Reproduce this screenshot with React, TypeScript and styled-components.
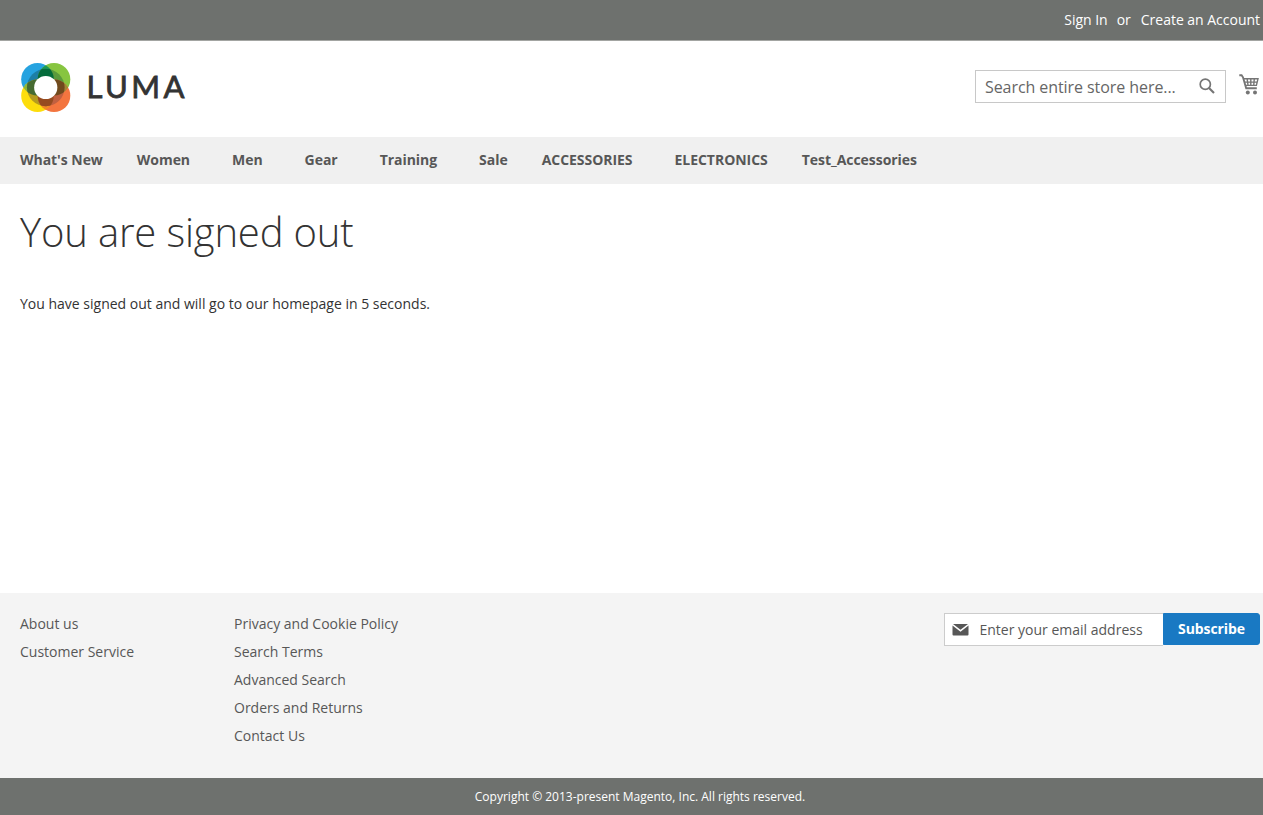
import React from "react";
import styled, { createGlobalStyle } from "styled-components";

const GlobalStyle = createGlobalStyle`
  *, *::before, *::after { box-sizing: border-box; }
  body {
    margin: 0;
    background: #fff;
    color: #333;
    font: 400 14px/20px "Open Sans", "Noto Sans", sans-serif;
  }
  a { color: inherit; text-decoration: none; }
`;

const Page = styled.div`
  display: flex;
  flex-direction: column;
  min-height: 815px;
  overflow: hidden;
`;

const Panel = styled.div`
  display: flex;
  justify-content: flex-end;
  height: 41px;
  padding: 10px 3px 0 0;
  background: #6e716e;
  border-bottom: 1px solid #a3a5a2;
  color: #fff;
`;

const PanelText = styled.span<{ $gap?: number }>`
  margin-left: ${(p) => p.$gap ?? 0}px;
  letter-spacing: -0.02px;
`;

const Header = styled.header`
  display: flex;
  justify-content: space-between;
  height: 96px;
  padding: 21px 3px 0 20px;
`;

const Logo = styled.a`
  display: flex;
  align-items: flex-start;
`;

const Wordmark = styled.span`
  margin: 4px 0 0 13.5px;
  color: #333;
  font: 400 31px/40px Lato, sans-serif;
  letter-spacing: 3.4px;
  -webkit-text-stroke: 0.8px #333;
`;

const HeaderTools = styled.div`
  display: flex;
  align-items: flex-start;
  padding-top: 8px;
`;

const SearchBox = styled.div`
  display: flex;
  justify-content: space-between;
  width: 251px;
  height: 33px;
  padding: 0 10px 0 9px;
  border: 1px solid #c8c8c8;
  background: #fff;
  color: #666;
  font-size: 16px;
  line-height: 33px;
  letter-spacing: -0.07px;
  svg { margin-top: 7px; }
`;

const CartLink = styled.a`
  display: block;
  margin: 4px 0 0 13px;
  height: 22px;
`;

const Nav = styled.nav`
  display: flex;
  height: 47px;
  padding: 13px 20px 0;
  background: #f0f0f0;
  color: #575757;
  font-weight: 700;
  letter-spacing: -0.042px;
`;

const NavItem = styled.a<{ $gap: number }>`
  margin-right: ${(p) => p.$gap}px;
  white-space: nowrap;
`;

const Main = styled.main`
  flex: 1;
  padding: 26px 20px 0;
`;

const Title = styled.h1`
  margin: 0 0 40px;
  font-size: 40px;
  font-weight: 300;
  line-height: 44px;
  letter-spacing: -0.16px;
`;

const Message = styled.p`
  margin: 0;
`;

const Footer = styled.footer`
  display: flex;
  height: 185px;
  padding: 20px 3px 0 20px;
  background: #f4f4f4;
  color: #575757;
`;

const FooterLinks = styled.ul<{ $width: number }>`
  width: ${(p) => p.$width}px;
  margin: 0;
  padding: 1px 0 0;
  list-style: none;
  li { height: 28px; }
`;

const Newsletter = styled.form`
  display: flex;
  margin-left: auto;
`;

const EmailField = styled.div`
  display: flex;
  width: 219px;
  height: 33px;
  padding-left: 7px;
  border: 1px solid #ccc;
  border-right: 0;
  background: #fff;
  line-height: 31px;
  svg { margin: 10px 10.5px 0 0; }
`;

const Subscribe = styled.button`
  width: 97px;
  height: 32px;
  padding: 0;
  border: 1px solid #1979c3;
  border-radius: 0 3px 3px 0;
  background: #1979c3;
  color: #fff;
  font: 700 14px/30px "Open Sans", sans-serif;
  letter-spacing: -0.1px;
`;

const Copyright = styled.small`
  height: 37px;
  padding: 9px 0 0 17px;
  background: #6e716e;
  color: #fff;
  font-size: 12px;
  text-align: center;
`;

const LogoMark = () => (
  <svg width="53" height="52" viewBox="0 0 53 52">
    <defs>
      <clipPath id="petal-tl"><circle cx="17.5" cy="17.3" r="16.3" /></clipPath>
      <clipPath id="petal-tr"><circle cx="34" cy="17.3" r="16.3" /></clipPath>
      <clipPath id="petal-br"><circle cx="34" cy="33.7" r="16.3" /></clipPath>
      <clipPath id="petal-bl"><circle cx="17.5" cy="33.7" r="16.3" /></clipPath>
    </defs>
    <circle cx="17.5" cy="17.3" r="16.3" fill="#26a3e0" />
    <circle cx="34" cy="17.3" r="16.3" fill="#87c540" />
    <circle cx="17.5" cy="33.7" r="16.3" fill="#fddd0c" />
    <circle cx="34" cy="33.7" r="16.3" fill="#f3753f" />
    <circle cx="34" cy="17.3" r="16.3" fill="#1b9a55" clipPath="url(#petal-tl)" />
    <circle cx="17.5" cy="33.7" r="16.3" fill="#8bb53c" clipPath="url(#petal-tl)" />
    <circle cx="17.5" cy="33.7" r="16.3" fill="#f08a24" clipPath="url(#petal-br)" />
    <circle cx="34" cy="33.7" r="16.3" fill="#a08a35" clipPath="url(#petal-tr)" />
    <circle cx="25.75" cy="25.5" r="18.8" fill="#1d7fa6" clipPath="url(#petal-tl)" />
    <circle cx="25.75" cy="25.5" r="18.8" fill="#5b9a3c" clipPath="url(#petal-tr)" />
    <circle cx="25.75" cy="25.5" r="18.8" fill="#b59b1f" clipPath="url(#petal-bl)" />
    <circle cx="25.75" cy="25.5" r="18.8" fill="#c06040" clipPath="url(#petal-br)" />
    <g clipPath="url(#petal-tl)">
      <circle cx="25.75" cy="25.5" r="18.8" fill="#056c3c" clipPath="url(#petal-tr)" />
      <circle cx="25.75" cy="25.5" r="18.8" fill="#466b32" clipPath="url(#petal-bl)" />
    </g>
    <g clipPath="url(#petal-br)">
      <circle cx="25.75" cy="25.5" r="18.8" fill="#704a1d" clipPath="url(#petal-tr)" />
      <circle cx="25.75" cy="25.5" r="18.8" fill="#964b20" clipPath="url(#petal-bl)" />
    </g>
    <circle cx="25.75" cy="25.5" r="11.6" fill="#fff" />
  </svg>
);

const SearchIcon = () => (
  <svg width="16" height="16" viewBox="0 0 16 16" fill="none" stroke="#757575">
    <circle cx="6.3" cy="6.3" r="5.1" strokeWidth="1.7" />
    <path d="M10 10l5 5" strokeWidth="2.1" />
  </svg>
);

const CartIcon = () => (
  <svg width="21" height="22" viewBox="0 0 21 22" fill="none" stroke="#757575">
    <path d="M.3 1.3h2.3L4 3.3l3.2 11h10.6" strokeWidth="1.9" />
    <path d="M4.3 4.8H19l-1.6 6.6H6.5M5 8.1h13.2M8.1 4.6l1 7.2M11.8 4.6v7.2M15.3 4.6l-.6 7.2" strokeWidth="1.4" />
    <circle cx="8.8" cy="18.6" r="2" fill="#757575" stroke="none" />
    <circle cx="16" cy="18.6" r="2" fill="#757575" stroke="none" />
  </svg>
);

const MailIcon = () => (
  <svg width="17" height="12" viewBox="0 0 17 12" fill="#575757">
    <path d="M1 0h15l-7.5 5.8zM.5 1.6l8 6.2 8-6.2v8.9a1 1 0 0 1-1 1h-14a1 1 0 0 1-1-1z" />
  </svg>
);

const navItems: [string, number][] = [
  ["What's New", 34],
  ["Women", 42],
  ["Men", 42],
  ["Gear", 42],
  ["Training", 42],
  ["Sale", 34],
  ["ACCESSORIES", 42],
  ["ELECTRONICS", 34],
  ["Test_Accessories", 0],
];

const companyLinks = ["About us", "Customer Service"];
const storeLinks = [
  "Privacy and Cookie Policy",
  "Search Terms",
  "Advanced Search",
  "Orders and Returns",
  "Contact Us",
];

export default function App() {
  return (
    <Page>
      <GlobalStyle />
      <Panel>
        <PanelText as="a">Sign In</PanelText>
        <PanelText $gap={9}>or</PanelText>
        <PanelText as="a" $gap={10}>Create an Account</PanelText>
      </Panel>
      <Header>
        <Logo>
          <LogoMark />
          <Wordmark>LUMA</Wordmark>
        </Logo>
        <HeaderTools>
          <SearchBox>
            <span>Search entire store here...</span>
            <SearchIcon />
          </SearchBox>
          <CartLink><CartIcon /></CartLink>
        </HeaderTools>
      </Header>
      <Nav>
        {navItems.map(([label, gap]) => (
          <NavItem key={label} $gap={gap}>{label}</NavItem>
        ))}
      </Nav>
      <Main>
        <Title>You are signed out</Title>
        <Message>You have signed out and will go to our homepage in 5 seconds.</Message>
      </Main>
      <Footer>
        <FooterLinks $width={214}>
          {companyLinks.map((l) => <li key={l}><a>{l}</a></li>)}
        </FooterLinks>
        <FooterLinks $width={214}>
          {storeLinks.map((l) => <li key={l}><a>{l}</a></li>)}
        </FooterLinks>
        <Newsletter>
          <EmailField>
            <MailIcon />
            <span>Enter your email address</span>
          </EmailField>
          <Subscribe type="button">Subscribe</Subscribe>
        </Newsletter>
      </Footer>
      <Copyright>Copyright © 2013-present Magento, Inc. All rights reserved.</Copyright>
    </Page>
  );
}
